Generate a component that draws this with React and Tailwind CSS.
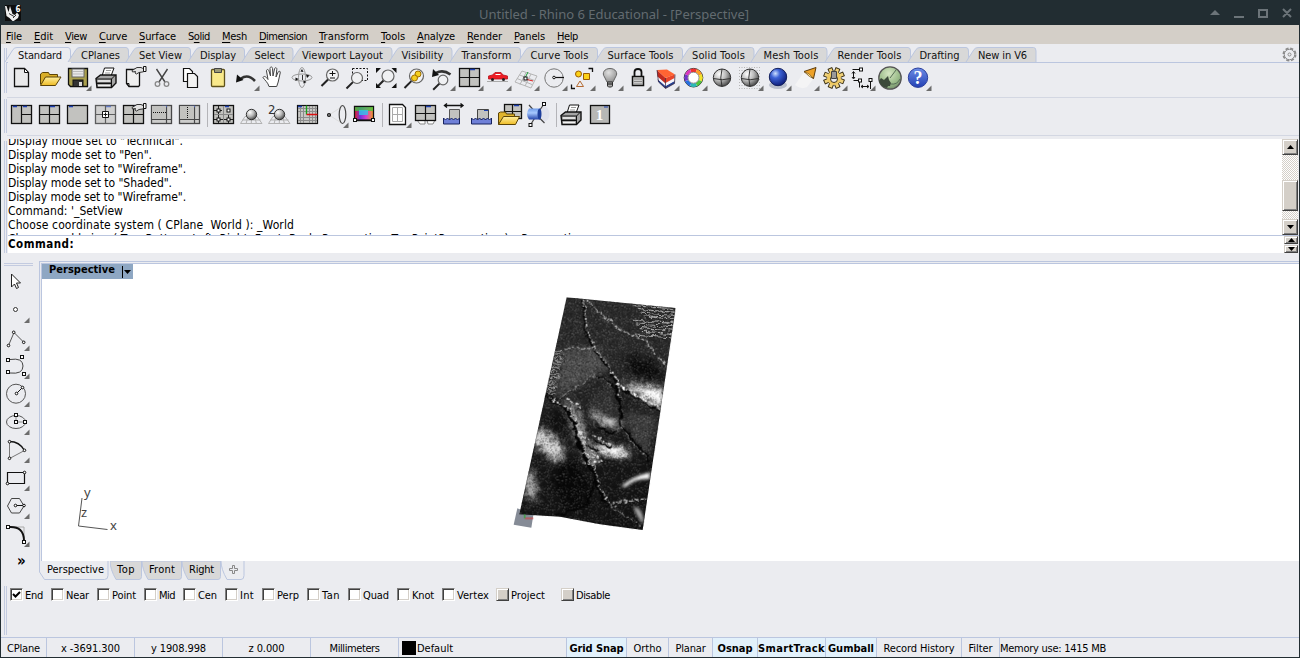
import React, { useLayoutEffect, useRef } from "react";

// Spreads a label's letters so that it fills the width given by its class.
function Fit({ className = "", children }) {
  const box = useRef(null);
  const inner = useRef(null);
  useLayoutEffect(() => {
    const n = inner.current.textContent.length;
    inner.current.style.letterSpacing = "0px";
    const natural = inner.current.getBoundingClientRect().width;
    inner.current.style.letterSpacing = (box.current.getBoundingClientRect().width - natural) / n + "px";
  }, []);
  return (
    <span ref={box} className={"inline-block shrink-0 whitespace-pre text-left " + className}>
      <span ref={inner} className="inline-block">{children}</span>
    </span>
  );
}

const menus = [
  ["", "F", "ile", "w-[16px]"], ["", "E", "dit", "w-[19px]"], ["", "V", "iew", "w-[22px]"], ["", "C", "urve", "w-[28px]"],
  ["", "S", "urface", "w-[37px]"], ["S", "o", "lid", "w-[22px]"], ["", "M", "esh", "w-[25px]"], ["", "D", "imension", "w-[48px]"],
  ["", "T", "ransform", "w-[50px]"], ["", "T", "ools", "w-[24px]"], ["", "A", "nalyze", "w-[38px]"], ["", "R", "ender", "w-[35px]"],
  ["", "P", "anels", "w-[31px]"], ["", "H", "elp", "w-[21px]"],
];

const tabs = [
  ["Standard", "w-[44px]", 63], ["CPlanes", "w-[39px]", 58], ["Set View", "w-[43px]", 62], ["Display", "w-[36px]", 54],
  ["Select", "w-[30px]", 48.5], ["Viewport Layout", "w-[81px]", 98.5], ["Visibility", "w-[42px]", 60.5], ["Transform", "w-[50px]", 68],
  ["Curve Tools", "w-[58px]", 77], ["Surface Tools", "w-[66px]", 85], ["Solid Tools", "w-[53px]", 71.5], ["Mesh Tools", "w-[55px]", 73.5],
  ["Render Tools", "w-[64px]", 83], ["Drafting", "w-[40px]", 58], ["New in V6", "w-[49px]", 67.5],
];

function TopTab({ label, fit, w, active }) {
  return (
    <div className="relative flex h-[15px] items-center justify-end pr-[9px]" style={{ width: w }}>
      <svg className="absolute left-0 top-0 overflow-visible" width={w} height="15">
        <path d={`M-3 15 L5 2.5 Q6.500 .5 9 .5 H${w - 3} Q${w - 0.5} .5 ${w - 0.5} 4 V15`} fill={active ? "#ebecf0" : "#d8d8d8"} stroke="#bbc6df" />
      </svg>
      <Fit className={"relative top-px text-[11px] leading-[14px] text-[#111] " + fit}>{label}</Fit>
    </div>
  );
}

const Corner = () => <path d="M27.500 21.500V27h-5.500z" fill="#6c6c6c" stroke="none" />;

function Icon({ children, c }) {
  return (
    <svg className="size-7 shrink-0" viewBox="0 0 28 28" fill="none" stroke="#111" strokeWidth="1">
      {children}
      {c && <Corner />}
    </svg>
  );
}

const Lens = ({ x = 16.500, y = 11.500, r = 6 }) => (
  <g>
    <path d={`M${x - r * 0.7} ${y + r * 0.7}L${x - r - 5} ${y + r + 5}`} stroke="#222" strokeWidth="2" />
    <circle cx={x} cy={y} r={r} fill="#f0f1f3" stroke="#666" strokeWidth="1.200" />
  </g>
);
const Panes = ({ x = 3.5, y = 4.5, w = 20, h = 18, sx = 10, sy = 9, tx = 14 }) => (
  <g>
    <rect x={x} y={y} width={w} height={h} fill="#c2c2bf" stroke="#111" strokeWidth="1.300" />
    <path d={`M${x + sx} ${y}v${h}M${x} ${y + sy}h${w}`} strokeWidth="1.200" />
    <path d={`M${tx} ${y + 1}h5`} stroke="#1d3fae" strokeWidth="1.500" />
  </g>
);
const Pointer = () => (
  <g>
    <path d="M12 6.500l5-3h4l1.500.8h1v3.500l-4.500.7-2.500 1.500-1.500-1 .5-1.500-3 .5z" fill="#e2e2e2" stroke="#222" strokeWidth=".9" />
    <path d="M23.500 2.500h2.500v5h-2.500z" fill="#fff" stroke="#111" />
  </g>
);
const Printer = () => (
  <g>
    <path d="M10 12l2.500-8h9.500l-3 8" fill="#fff" /><path d="M14 6.500h5M13 9h5" stroke="#999" />
    <path d="M4 14.500l4.500-3.500H24v8l-4.500 4.500H5z" fill="#a5a5a5" stroke="#111" strokeWidth="1.400" />
    <path d="M4 15h15.500l4-4M19.500 15v8" /><path d="M6 17h12M6 21.500h12" stroke="#f2f2f2" strokeWidth="1.300" /><path d="M5 19.300h14" strokeWidth="1.500" />
  </g>
);
const Ball = () => (
  <g><circle cx="14" cy="13.700" r="8.700" fill="url(#grey)" stroke="#333" /><path d="M5.300 14.500q9 2.500 17.400 0M14 5q-2.500 9 0 17.500" stroke="#2a2a2a" strokeWidth=".9" /></g>
);
const Dot = ({ x, y }) => <rect x={x - 1.5} y={y - 1.5} width="3" height="3" fill="#fff" stroke="#111" />;
const Pt = ({ x, y }) => <circle cx={x} cy={y} r="1.300" fill="#fff" stroke="#111" />;
const Wave = ({ x, y, w }) => (
  <path d={`M${x} ${y}l2 2 2-2 2 2 2-2 2 2 2-2 2 2 2-2${w > 16 ? "l2 2 2-2" : ""}v6h-${w}z`} fill="#6f80d8" stroke="#17235f" />
);
const BallGrid = () => (
  <g>
    <path d="M8 15.500h12l5 7H3.500zM5.500 19h18M11 15l-2 8M17.500 15l2 8M14.300 15v8" stroke="#b2b2b2" fill="none" />
    <circle cx="14.500" cy="13.500" r="5.200" fill="url(#grey)" stroke="#333" />
  </g>
);

function StandardBar() {
  return (
    <>
      <Icon><path d="M6.500 4.500h10l4 4v14h-14z" fill="#e9e9ea" strokeWidth="1.300" /><path d="M16.500 4.500v4h4z" fill="#fff" /></Icon>
      <Icon><path d="M4.500 20.500V10l2-1.500h6l1 2h8v3" fill="#d9ae28" stroke="#5c4407" /><path d="M4.500 21.500l5-8.500H25l-5.500 8.500z" fill="url(#gold)" stroke="#5c4407" /></Icon>
      <Icon c><path d="M4.500 4.500h19v18h-17l-2-2z" fill="#aaa04e" stroke="#111" strokeWidth="1.300" /><rect x="8" y="5" width="12" height="8" fill="#e8e8e8" stroke="#666" /><path d="M9 7.500h10M9 10h10" stroke="#bbb" /><rect x="9" y="16" width="10" height="6.500" fill="#333" /><path d="M15 18h3v4h-3z" fill="#ddd" stroke="none" /></Icon>
      <Icon><Printer /></Icon>
      <Icon><path d="M6.500 5.500h13v16l-1 1H9l-2.500-3z" fill="#efefef" strokeWidth="1.300" /><path d="M6.500 19.500H9v3" /><Pointer /></Icon>
      <Icon><path d="M8.500 5l8.500 13M19.500 5L11 18" stroke="#444" strokeWidth="1.400" /><circle cx="9.500" cy="20" r="2.300" stroke="#888" strokeWidth="1.300" /><circle cx="18.500" cy="20" r="2.300" stroke="#888" strokeWidth="1.300" /></Icon>
      <Icon><path d="M7.500 4.500h6l3 3v10h-9z" fill="#fff" strokeWidth="1.200" /><path d="M11.500 9.500h7l3 3v11h-10z" fill="#f2f2f2" strokeWidth="1.200" /></Icon>
      <Icon><rect x="7.500" y="5.500" width="13" height="17" rx="1" fill="#f9e98b" stroke="#5f521a" strokeWidth="1.300" /><path d="M10.500 4.500h7v4h-7z" fill="#9a9877" stroke="#444" /></Icon>
      <Icon c><path d="M9 14.500q7-5 14 2.500" stroke="#333" strokeWidth="2.600" /><path d="M4 18.500l1-8 6.500 5.500z" fill="#111" stroke="none" /></Icon>
      <Icon><path d="M9 22.500c-1-4-4-6-6-9 1-2 3-1 5 2L6.500 7c0-2 2-2 2.500 0l1.500 5-.5-7.500c0-2 2.500-2 2.500 0L13 12l1.500-7c.5-2 2.500-1.500 2.300.3L16 13l2.200-5c.8-1.500 2.500-.8 2 1l-2 9-1.500 4.500z" fill="#fff" stroke="#444" /></Icon>
      <Icon><ellipse cx="14" cy="13.500" rx="10" ry="3.500" stroke="#999" /><ellipse cx="14" cy="13.500" rx="3.500" ry="10" stroke="#999" /><path d="M10.500 15l-3 2v-3.500zM18 10.500l3.500 1-2.500 2.500zM12.500 7.500l1.500-2.500 1.500 3zM15.500 19.500l3-1.500-3-1.500z" fill="#111" stroke="none" /><path d="M14.500 11v5" stroke="#333" /></Icon>
      <Icon><Lens x={16.5} y={11} /><path d="M13.500 9.500h6M16.500 7v5M14 14h5" /></Icon>
      <Icon><path d="M8.500 4.500h15v12h-15z" strokeDasharray="2 1.500" /><Lens x={13} y={14} r={5.5} /></Icon>
      <Icon><Lens x={16} y={12} /><path d="M4 4h5l-5 5zM24.500 4h-5l5 5zM4 24v-5l5 5zM24.500 24v-5l-5 5z" fill="#111" stroke="none" /></Icon>
      <Icon><Lens x={16.5} y={12} r={7} /><circle cx="18" cy="10" r="3" fill="#f5cf20" stroke="#a07000" /><circle cx="14.500" cy="14" r="3" fill="#f5cf20" stroke="#a07000" /></Icon>
      <Icon c><path d="M8 9q7-4 14.500 1.500" stroke="#333" strokeWidth="2.600" /><path d="M4 13l1-8 6 6z" fill="#111" stroke="none" /><Lens x={15} y={16} r={4.8} /></Icon>
      <Icon c><Panes /></Icon>
      <Icon c><path d="M3 17.500h21" stroke="#aaa" /><path d="M4.500 15v-3l4-1 2.500-2.500h6l2 2.500 4.500 1v3z" fill="#ed1c24" stroke="#b5121a" strokeWidth=".8" /><path d="M11.500 10.500h5" stroke="#fff" /><circle cx="8.500" cy="15.500" r="1.500" fill="#222" stroke="none" /><circle cx="19.500" cy="15.500" r="1.500" fill="#222" stroke="none" /></Icon>
      <Icon c><path d="M10 7l15 5-6 12L3 18zM7.500 11l15 5.500M5 14.500l15 6M14 8.500l-6 12M19 10l-6 12" stroke="#b5b5b5" /><path d="M13 14l3-6" stroke="#159b32" /><path d="M13 15l8 2" stroke="#d22" /><Dot x={13.5} y={14.5} /></Icon>
      <Icon c><circle cx="14" cy="14" r="9.200" stroke="#777" /><path d="M14 13.500h10" strokeWidth="1.200" /><Pt x={14} y={13.5} /></Icon>
      <Icon c><circle cx="10.500" cy="10" r="3" fill="#fcd116" stroke="#9b5c00" /><path d="M15.500 9.500h6v6h-6z" fill="#fcd116" stroke="#9b5c00" /><path d="M12 17l3.500 5.500h-7z" stroke="#b46a32" /><path d="M20.500 4.500h4V8M3.500 20.500v4H7" strokeWidth="1.300" /></Icon>
      <Icon c><path d="M11 18l-2.500-5c-3-4 0-8.500 5.500-8.500s8.500 4.500 5.500 8.500L17 18z" fill="url(#bulb)" stroke="#666" /><path d="M11.500 18h5v4l-1 1h-3l-1-1z" fill="#aaa" stroke="#333" /><path d="M11.500 20h5" /></Icon>
      <Icon c><path d="M10.500 13V8q0-3 3.500-3t3.500 3v5" strokeWidth="1.800" /><path d="M8.500 12.500h11v9h-11z" fill="#ccc" strokeWidth="1.500" /><path d="M10 15h8M10 17.500h8M10 20h8" stroke="#888" /></Icon>
      <Icon c>
        <path d="M5.500 15l8 7v2.500L6.500 18zM13.500 22l9-5v2.500l-9 5z" fill="#27408f" stroke="none" />
        <path d="M5.500 12l8 7.500v2.500l-8-7zM13.500 19l9-5v3l-9 5z" fill="#f4f4fa" stroke="none" />
        <path d="M5 6l8.500 8v5.500L5.500 12.500z" fill="#c22a1e" stroke="none" />
        <path d="M13.500 14l9-3.500V14l-9 5z" fill="#e8452b" stroke="none" />
        <path d="M5 6l10-.5 8 5-9.500 3.500z" fill="#ff6433" stroke="none" />
        <path d="M5 6l1.500 12 7 6.500 9-5 .5-9M13.500 14v10" stroke="#30203a" strokeWidth=".7" />
      </Icon>
      <Icon c>
        <circle cx="13.500" cy="13.700" r="9.300" stroke="#333" />
        {["#ef3030", "#ff9c20", "#f2e428", "#51c63b", "#29b9b4", "#276fe0", "#7135cd", "#d936bd"].map((col, i) => (
          <path key={col} d="M10.700 6.800A7.400 7.400 0 0 1 16.300 6.800" stroke={col} strokeWidth="3.400" transform={`rotate(${i * 45} 13.500 13.700)`} />
        ))}
        <circle cx="13.500" cy="13.700" r="5.500" fill="#fff" stroke="#666" strokeWidth=".7" />
      </Icon>
      <Icon><Ball /></Icon>
      <Icon c><path d="M3 3.500h22M3 6.500h22M3 9.500h22M3 12.500h22M3 15.500h22M3 18.500h22M3 21.500h22M3 24.500h22" stroke="#b5b5b5" strokeDasharray="1 1.500" /><Ball /></Icon>
      <Icon c><ellipse cx="14" cy="21" rx="9" ry="4" fill="#b9bfcc" stroke="none" /><circle cx="14" cy="13" r="8.700" fill="url(#blue)" stroke="#14205c" /></Icon>
      <Icon c><path d="M12 8L3 21q6 5 12 2l7-9z" fill="#f4f4f5" stroke="none" /><path d="M12 7.500l12-4-2.500 11z" fill="#eda128" stroke="#5d3b0a" /><path d="M12 7.500q5 1 9.500 7l-4-2z" fill="#ffe08d" stroke="#5d3b0a" strokeWidth=".6" /></Icon>
      <Icon c>
        <g stroke="#33290f" strokeWidth="5">{[0, 45, 90, 135].map((a) => <path key={a} d="M14 3.200v21.600" transform={`rotate(${a + 22} 14 14)`} />)}</g>
        <g stroke="#f0d27c" strokeWidth="3.200">{[0, 45, 90, 135].map((a) => <path key={a} d="M14 4.100v19.800" transform={`rotate(${a + 22} 14 14)`} />)}</g>
        <circle cx="14" cy="14" r="7" fill="#eec963" stroke="none" /><circle cx="14" cy="15" r="3.500" fill="#ebecf0" stroke="#3e3418" /><path d="M11.500 7.500h5v7h-5z" fill="#9a9a9a" stroke="#444" />
      </Icon>
      <Icon c><path d="M4.500 5.500h9M5.500 8v6M5.500 16.500h6v7M22.500 16v9M13.500 22.500h7M4 9.500l1.500-2 1.500 2M4 13l1.500 2 1.500-2M15 21l-2 1.500 2 1.500M19 21l2 1.500-2 1.500" /><Dot x={13} y={5.5} /><Dot x={12} y={16.5} /><Dot x={22.5} y={16} /></Icon>
      <Icon><circle cx="14" cy="14" r="11.200" fill="url(#green)" stroke="#555" strokeWidth="1.300" /><path d="M5 14l3 2 4-4 1 4 2 3-1 3h-2l-1 2q-6-1-8-7z" fill="#3b493a" stroke="none" /><path d="M14 14L20 6M15 20q6 1 9-5" stroke="#587057" /></Icon>
      <Icon c><circle cx="14" cy="13.700" r="9.700" fill="url(#help)" stroke="#2b3f9c" /><text x="14" y="20" textAnchor="middle" fontSize="18" fontWeight="bold" fill="#fff" stroke="none" fontFamily="Liberation Serif, serif">?</text></Icon>
    </>
  );
}

const Sep = ({ className }) => (
  <div className={"flex h-7 items-center " + className}><div className="h-6 w-px bg-[#b4b4b8]" /></div>
);

function ViewBar() {
  return (
    <>
      <Icon><rect x="3.500" y="4.500" width="20" height="18" fill="#c2c2bf" strokeWidth="1.300" /><path d="M13.500 4.500v18M13.500 13.500h10" strokeWidth="1.200" /><path d="M5 5.500h4M15 5.500h4" stroke="#1d3fae" strokeWidth="1.500" /></Icon>
      <Icon><Panes /></Icon>
      <Icon><rect x="3.500" y="4.500" width="20" height="18" fill="#c2c2bf" strokeWidth="1.300" /><path d="M5 5.500h4" stroke="#1d3fae" strokeWidth="1.500" /></Icon>
      <Icon><g opacity=".65"><Panes /></g><path d="M10.500 10.500h6v6h-6z" fill="#fff" /><path d="M11.500 13.500h4M13.500 11.500v4" /></Icon>
      <Icon><Panes /><Pointer /></Icon>
      <Icon><g opacity=".75"><Panes sx={15} sy={14} /></g><path d="M4 5h14v13H4z" fill="#c2c2bf" stroke="none" /><path d="M5 11.500h13" strokeDasharray="1 1" /></Icon>
      <Icon><g opacity=".75"><Panes sx={15} sy={14} /></g><path d="M4 5h14v13H4z" fill="#c2c2bf" stroke="none" /><path d="M11.500 6v12" strokeDasharray="1 1" /></Icon>
      <Sep className="w-[5px] pl-[3px]" />
      <Icon><rect x="4.500" y="4.500" width="20" height="18" fill="#c2c2bf" strokeWidth="1.300" /><path d="M9.500 5v17M5 9.500h8M19.500 13v9M5 18.500h19" strokeWidth=".9" /><path d="M14.500 5v17M5 13.500h19" stroke="#888" /><Dot x={9.5} y={9.5} /><Dot x={19.5} y={9.5} /><Dot x={9.5} y={18.5} /><Dot x={19.5} y={18.5} /><path d="M16 5.500h4" stroke="#1d3fae" strokeWidth="1.500" /></Icon>
      <Icon><BallGrid /></Icon>
      <Icon><BallGrid /><text x="3" y="13" fontSize="13" fill="#333" stroke="none">2</text></Icon>
      <Icon><rect x="4.500" y="4.500" width="20" height="18" fill="#c8c8c5" strokeWidth="1.200" /><path d="M7.500 5v17M10.500 5v17M16.500 5v17M19.500 5v17M22.500 5v17M5 7.500h19M5 10.500h19M5 16.500h19M5 19.500h19" stroke="#8c8c8c" /><path d="M13.500 4.500v9" stroke="#19a319" strokeWidth="1.300" /><path d="M13.500 13.500h11" stroke="#d11" strokeWidth="1.500" /><path d="M5 5.500h4" stroke="#1d3fae" strokeWidth="1.500" /></Icon>
      <Icon c><path d="M8 14L22 5M8 14l14 9" stroke="#ddd" /><circle cx="8" cy="14" r="1.400" strokeWidth="1.300" /><ellipse cx="21.500" cy="13.500" rx="3.300" ry="9" stroke="#444" strokeWidth="1.200" /></Icon>
      <Icon>
        <path d="M5.500 5.500h19v14h-19z" fill="url(#rainbow)" strokeWidth="1.300" />
        <path d="M6 6h18v4H6z" fill="#35d33c" opacity=".7" stroke="none" /><path d="M10 9h9v5h-9z" fill="#30c8e8" opacity=".8" stroke="none" />
        <path d="M6 19h18" /><Dot x={6} y={19} /><Dot x={24} y={19} />
      </Icon>
      <Sep className="w-[7px] pl-[5px]" />
      <Icon c><path d="M5.500 3.500h13l3 3v17h-16z" fill="#fff" strokeWidth="1.300" /><path d="M8.500 6.500h10v14h-10zM13.500 6.500v14M8.500 13.500h10" stroke="#aaa" /></Icon>
      <Icon><path d="M5 19h8v4H8zM15 19h8l-2 4h-5z" fill="#fff" stroke="#888" /><Panes x={3.5} y={4.5} w={20} h={15} sy={8} /></Icon>
      <Icon><path d="M5 4.500h17M7 2.500L4.500 4.500 7 6.500M20.500 2.500l2.500 2-2.500 2" strokeWidth="1.400" /><path d="M9.500 8.500h10v13h-10z" fill="#c2c2bf" stroke="#555" /><Wave x={3.5} y={17} w={16} /></Icon>
      <Icon><path d="M9.500 8.500h11v10h-11z" fill="#c2c2bf" stroke="#444" /><path d="M16 9.500h4" stroke="#1d3fae" /><Wave x={3.5} y={17} w={20} /></Icon>
      <Icon><Panes x={8.5} y={3.5} w={17} h={14} sx={8} sy={7} tx={18} /><path d="M2.500 23.500V12l2-1h5l1 2h8v3" fill="#e0b42c" stroke="#5c4407" /><path d="M2.500 23.500l5-8h16l-4 8z" fill="url(#gold)" stroke="#5c4407" /></Icon>
      <Icon><ellipse cx="20" cy="13" rx="5.500" ry="7.500" fill="#e0e2ec" stroke="none" /><path d="M5 4l8 9 7-10M6.500 24l6-10 8 8" stroke="#444" strokeWidth="1.200" /><path d="M5 7.500h11v11H5q-4-5.500 0-11z" fill="url(#tube)" stroke="none" /><ellipse cx="15.500" cy="13" rx="2" ry="5.500" fill="#1e3f9d" stroke="none" /><Dot x={20} y={3} /><Dot x={6.5} y={24} /></Icon>
      <Sep className="w-[5px] pl-[4px]" />
      <Icon><Printer /></Icon>
      <Icon><rect x="5.500" y="4.500" width="19" height="18" fill="#b7b7b5" strokeWidth="1.300" /><path d="M19 6h4" stroke="#1d3fae" /><text x="14.500" y="19" fontSize="15" fontWeight="bold" textAnchor="middle" fill="#fff" stroke="none" fontFamily="Liberation Serif, serif">1</text></Icon>
    </>
  );
}

function SideBar() {
  return (
    <>
      <Icon><path d="M9.500 6v13l3-3 2 4.500 2-1-2-4.500h4z" fill="#fff" stroke="#222" /></Icon>
      <Icon c><circle cx="13.500" cy="13.500" r="2" fill="#fff" stroke="#333" /></Icon>
      <Icon c><path d="M6.500 21.500l5.500-13 10 10" stroke="#555" /><Pt x={6.5} y={21.5} /><Pt x={11.7} y={8.3} /><Pt x={21.7} y={18.3} /></Icon>
      <Icon c><path d="M8 7.500q13-2 13 6.500t-13 7" stroke="#444" /><Dot x={6} y={8} /><Dot x={20} y={5} /><Dot x={6} y={20} /><Dot x={22} y={22} /></Icon>
      <Icon c><circle cx="14" cy="13.700" r="9.500" stroke="#555" /><path d="M14.500 13.500l6-6" /><Pt x={14.5} y={13.5} /><Pt x={20.5} y={7.5} /></Icon>
      <Icon c><ellipse cx="14" cy="14" rx="9.500" ry="6.500" stroke="#555" /><path d="M14 7v7h9" stroke="#888" /><Dot x={14} y={14} /><Dot x={14} y={7} /><Dot x={23} y={14} /></Icon>
      <Icon c><path d="M7.500 5.500v17l15-8" stroke="#777" /><path d="M7.500 5.500q10 0 15 9" strokeWidth="1.300" /><Pt x={7.5} y={5.7} /><Pt x={7.5} y={22.3} /><Pt x={22.5} y={14.3} /></Icon>
      <Icon c><path d="M5.500 8.500h17v11h-17z" strokeWidth="1.200" /><Pt x={22.5} y={8.5} /><Pt x={5.5} y={19.5} /></Icon>
      <Icon c><path d="M5.500 14l4-7.500h8l4.500 7.500-4.500 7h-8z" stroke="#444" /><path d="M14 13.500h8" /><Pt x={13.5} y={13.5} /><Pt x={22} y={13.5} /></Icon>
      <Icon c><path d="M7 7h15v15" stroke="#aaa" /><path d="M7 7q15-1 15 14" strokeWidth="2" /><Dot x={6} y={7} /><Dot x={22} y={22} /></Icon>
    </>
  );
}

function Terrain() {
  return (
    <svg className="absolute left-[458px] top-[21px]" width="200" height="255" viewBox="0 0 600 765">
      <defs>
        <clipPath id="sheet"><path d="M200 37L527 69L428 735L300 718L180 695L58 688Z" /></clipPath>
        <filter id="speck" x="0" y="0" width="100%" height="100%" colorInterpolationFilters="sRGB">
          <feTurbulence type="fractalNoise" baseFrequency="0.31" numOctaves="2" seed="8" />
          <feColorMatrix values="0 0 0 0 1  0 0 0 0 1  0 0 0 0 1  7 0 0 0 -4" />
        </filter>
        <filter id="dark" x="0" y="0" width="100%" height="100%" colorInterpolationFilters="sRGB">
          <feTurbulence type="fractalNoise" baseFrequency="0.27" numOctaves="2" seed="21" />
          <feColorMatrix values="0 0 0 0 0.050  0 0 0 0 0.050  0 0 0 0 0.050  7 0 0 0 -3.700" />
        </filter>
        <filter id="rough" filterUnits="userSpaceOnUse" x="0" y="0" width="600" height="765" colorInterpolationFilters="sRGB">
          <feTurbulence type="fractalNoise" baseFrequency="0.050" numOctaves="3" seed="3" />
          <feDisplacementMap in="SourceGraphic" scale="22" xChannelSelector="R" yChannelSelector="G" />
        </filter>
        <filter id="soft" filterUnits="userSpaceOnUse" x="0" y="0" width="600" height="765" colorInterpolationFilters="sRGB">
          <feGaussianBlur stdDeviation="11" result="b" />
          <feTurbulence type="fractalNoise" baseFrequency="0.050" numOctaves="3" seed="5" result="n" />
          <feDisplacementMap in="b" in2="n" scale="34" xChannelSelector="R" yChannelSelector="G" />
        </filter>
        <filter id="soft2" x="-50%" y="-50%" width="200%" height="200%"><feGaussianBlur stdDeviation="4" /></filter>
        <linearGradient id="ground" x1="0" y1="0" x2="0.150" y2="1"><stop stopColor="#2c2c2c" /><stop offset=".42" stopColor="#2a2a2a" /><stop offset=".6" stopColor="#191919" /><stop offset="1" stopColor="#121212" /></linearGradient>
      </defs>
      <path d="M52 670L100 690L94 728L41 719Z" fill="#858b96" />
      <g clipPath="url(#sheet)">
        <rect width="600" height="765" fill="url(#ground)" />
        <g filter="url(#soft)">
          <path d="M190 190L300 190L325 250L220 310L165 325Z" fill="#505050" />
          <path d="M365 293L500 310L486 372L430 345Z" fill="#efefef" />
          <path d="M410 300L495 318L486 360Z" fill="#fff" />
          <ellipse cx="318" cy="402" rx="50" ry="22" fill="#c4c4c4" transform="rotate(24 318 402)" />
          <ellipse cx="335" cy="497" rx="54" ry="18" fill="#fff" transform="rotate(12 335 497)" />
          <ellipse cx="145" cy="480" rx="28" ry="60" fill="#dcdcdc" transform="rotate(-45 145 480)" />
          <ellipse cx="90" cy="600" rx="17" ry="52" fill="#bdbdbd" transform="rotate(-12 90 600)" />
          <path d="M195 340L235 365L262 470L290 510L285 545L235 490Z" fill="#969696" />
          <path d="M255 340L330 305L360 370L350 420L290 380Z" fill="#343434" />
          <path d="M380 375L475 390L445 520L380 440Z" fill="#404040" />
          <ellipse cx="430" cy="250" rx="60" ry="28" fill="#0a0a0a" transform="rotate(24 430 250)" />
          <ellipse cx="215" cy="600" rx="50" ry="80" fill="#080808" transform="rotate(-20 215 600)" />
          <ellipse cx="175" cy="405" rx="38" ry="25" fill="#101010" />
        </g>
        <g stroke="#c5c5c5" strokeWidth="3.500" fill="none" filter="url(#rough)">
          {[0, 1, 2, 3, 4, 5, 6, 7, 8].map((i) => <path key={i} d={`M${402 + (i % 4) * 9} ${62 + i * 11}l120 9`} opacity=".85" />)}
          {[0, 1, 2, 3, 4, 5, 6, 7, 8, 9, 10, 11, 12, 13].map((i) => <path key={i} d={`M${130} ${190 + i * 10}l${54 + (i % 3) * 5 - i * 2} 9`} opacity=".9" />)}
        </g>
        <rect width="600" height="765" filter="url(#dark)" opacity=".55" />
        <rect width="600" height="765" filter="url(#speck)" opacity=".24" />
        <g filter="url(#soft2)">
          <path d="M362 606Q395 575 450 562L448 582Q405 580 380 604Z" fill="#fff" />
          <path d="M400 665Q432 668 430 718Q410 695 400 665Z" fill="#aaa" />
          <path d="M305 490L355 492L350 508Z" fill="#fff" />
          <path d="M425 308L482 326L478 350Z" fill="#fff" opacity=".8" />
          <path d="M308 400L345 404L335 425Z" fill="#ddd" opacity=".8" />
        </g>
        <g filter="url(#rough)" fill="none">
          <path d="M246 45L258 140L281 190L321 240L346 285L362 340L360 420L450 525" stroke="#060606" strokeWidth="7" />
          <path d="M140 330L196 370L226 420L236 480L286 570L296 620L330 660" stroke="#050505" strokeWidth="11" />
          <path d="M250 45L262 140L285 190L325 240L350 285L365 345" stroke="#eee" strokeWidth="4" strokeDasharray="6 4 3 5" />
          <path d="M258 45L310 95L370 140L440 170L500 250" stroke="#ccc" strokeWidth="4" strokeDasharray="9 4 3 3" />
          <path d="M350 295L430 340L485 370" stroke="#fff" strokeWidth="5" strokeDasharray="9 4 3 3" />
          <path d="M355 305L430 352L485 382" stroke="#050505" strokeWidth="5" />
          <path d="M145 335L205 370L235 425L250 490L285 550L300 610L330 658L380 650L440 640" stroke="#ddd" strokeWidth="4" strokeDasharray="8 4 3 3" />
          <path d="M180 340L285 268L340 310M360 425L405 480L440 520M330 660L425 725M185 190h100" stroke="#a5a5a5" strokeWidth="3" strokeDasharray="12 3" />
          <path d="M250 470l45 50m-50-15l60 20m-55 10l50-5M280 450l45 25M200 340l45 30M240 440l30 30" stroke="#eee" strokeWidth="4.500" strokeDasharray="9 6" />
          <path d="M255 480l40 20M280 465l50 22M300 435l50 10" stroke="#050505" strokeWidth="6" />
          <path d="M290 270L350 310L365 400" stroke="#060606" strokeWidth="5" />
          <path d="M285 580L260 660L170 690" stroke="#050505" strokeWidth="6" />
        </g>
      </g>
      <path d="M75 700h25" stroke="#d33" strokeWidth="3" /><path d="M74 700v-12" stroke="#2a2" strokeWidth="3" />
    </svg>
  );
}

const log = [
  ['Display mode set to "Technical".', "w-[175px]"], ['Display mode set to "Pen".', "w-[144px]"], ['Display mode set to "Wireframe".', "w-[178px]"],
  ['Display mode set to "Shaded".', "w-[164px]"], ['Display mode set to "Wireframe".', "w-[178px]"], ["Command: '_SetView", "w-[115px]"],
  ["Choose coordinate system ( CPlane  World ): _World", "w-[286px]"],
  ["Choose world view ( Top  Bottom  Left  Right  Front  Back  Perspective  TwoPointPerspective ): _Perspective", "w-[576px]"],
];

const snaps = [
  ["End", "w-[41px]", "w-[18px]"], ["Near", "w-[46px]", "w-[23px]"], ["Point", "w-[47px]", "w-[24px]"], ["Mid", "w-[39px]", "w-[16px]"],
  ["Cen", "w-[42px]", "w-[19px]"], ["Int", "w-[37px]", "w-[14px]"], ["Perp", "w-[45px]", "w-[22px]"], ["Tan", "w-[41px]", "w-[18px]"],
  ["Quad", "w-[49px]", "w-[26px]"], ["Knot", "w-[45px]", "w-[22px]"], ["Vertex", "w-[54px]", "w-[32px]"], ["Project", "w-[65px]", "w-[34px]"],
  ["Disable", "w-[60px]", "w-[34px]"],
];

const cells = [
  ["CPlane", "w-[46px]", "w-[33px]"], ["x -3691.300", "w-[88px]", "w-[59px]"], ["y 1908.998", "w-[88px]", "w-[55px]"],
  ["z 0.000", "w-[88px]", "w-[36px]"], ["Millimeters", "w-[88px]", "w-[50px]"], ["Default", "w-[168px]", "w-[36px]", "layer"],
  ["Grid Snap", "w-[60px]", "w-[54px]", "on"], ["Ortho", "w-[42px]", "w-[28px]"], ["Planar", "w-[44px]", "w-[30px]"],
  ["Osnap", "w-[45px]", "w-[35px]", "on"], ["SmartTrack", "w-[68px]", "w-[67px]", "on"], ["Gumball", "w-[51px]", "w-[46px]", "on"],
  ["Record History", "w-[85px]", "w-[71px]"], ["Filter", "w-[38px]", "w-[24px]"], ["Memory use: 1415 MB", "grow", "w-[106px]", "last"],
];

const Btn = ({ className, up, down }) => (
  <div className={"flex shrink-0 items-center justify-center border border-b-[#404040] border-l-[#d4cfc8] border-r-[#404040] border-t-[#d4cfc8] bg-[#d4cfc8] shadow-[inset_1px_1px_#fff,inset_-1px_-1px_#808080] " + className}>
    {(up || down) && <svg width="7" height="4" viewBox="0 0 7 4"><path d={up ? "M0 4L3.500 0L7 4z" : "M0 0h7L3.500 4z"} fill="#000" /></svg>}
  </div>
);

const GripV = ({ className }) => <div className={"w-[3px] shrink-0 border-x border-[#c3cbe0] " + className} />;

const viewTabs = [["Top", "w-[32px]", "w-[18px]", 32], ["Front", "w-[40px]", "w-[26px]", 40], ["Right", "w-[39px]", "w-[25px]", 39]];

export default function App() {
  return (
    <div className="flex h-[658px] w-[1300px] flex-col overflow-hidden bg-[#222d32] font-['DejaVu_Sans_Condensed','DejaVu_Sans',sans-serif] text-[11px] leading-[14px] text-black">
      <svg className="absolute size-0">
        <defs>
          <radialGradient id="grey" cx=".35" cy=".3" r=".75"><stop stopColor="#fff" /><stop offset=".5" stopColor="#b8b8b8" /><stop offset="1" stopColor="#444" /></radialGradient>
          <radialGradient id="bulb" cx=".4" cy=".3" r=".8"><stop stopColor="#e0e0e0" /><stop offset="1" stopColor="#888" /></radialGradient>
          <radialGradient id="blue" cx=".35" cy=".3" r=".75"><stop stopColor="#cde0ff" /><stop offset=".35" stopColor="#3c62d6" /><stop offset="1" stopColor="#0c1a75" /></radialGradient>
          <radialGradient id="green" cx=".45" cy=".3" r=".75"><stop stopColor="#d5e6c2" /><stop offset=".6" stopColor="#9cbd8b" /><stop offset="1" stopColor="#6d8965" /></radialGradient>
          <linearGradient id="help" x2="0" y2="1"><stop stopColor="#6d8de6" /><stop offset="1" stopColor="#2340b4" /></linearGradient>
          <linearGradient id="tube" x2="0" y2="1"><stop stopColor="#6f9be8" /><stop offset=".4" stopColor="#a6c8ff" /><stop offset="1" stopColor="#2343ab" /></linearGradient>
          <linearGradient id="gold" x2="0" y2="1"><stop stopColor="#fff0a0" /><stop offset="1" stopColor="#eebb24" /></linearGradient>
          <linearGradient id="rainbow"><stop stopColor="#e22" /><stop offset=".3" stopColor="#6b35dd" /><stop offset=".6" stopColor="#d33bd0" /><stop offset="1" stopColor="#f5a020" /></linearGradient>
        </defs>
      </svg>

      <header className="flex h-[25px] shrink-0 items-center pl-[5px] pr-[7px] text-[#626b70]">
        <svg width="16" height="16" viewBox="0 0 16 16"><rect width="16" height="16" fill="#0d0d0d" /><path d="M0 1l1.500 0 2 6 1.500-6 2.500 8 2.500 1 2-2.500 2 2.500-1 3-5 3.500-3.500-3.500-3-2z" fill="#eee" /><path d="M4 8.500l5 3M8 13l3-3" stroke="#333" /><text x="10.500" y="7" fontSize="8" fontWeight="bold" fill="#fff">6</text></svg>
        <Fit className="ml-[458px] mt-[3px] w-[270px] font-['Noto_Sans',sans-serif] text-[13px] leading-[18px]">Untitled - Rhino 6 Educational - [Perspective]</Fit>
        <svg className="ml-auto" width="84" height="14" viewBox="0 0 84 14" fill="none" stroke="#6c7479" strokeWidth="2"><path d="M1 9l5-5 5 5z" fill="#6c7479" stroke="none" /><path d="M25 11h10M50 4h8v7h-8zM74 3l8 8M82 3l-8 8" /></svg>
      </header>

      <div className="mx-px mb-px flex min-h-0 grow flex-col bg-[#ebecf0]">
        <nav className="flex h-[19px] shrink-0 items-center gap-3 bg-[#d4cfc8] pl-[5px] pt-[4px]">
          {menus.map(([a, b, c, w]) => <Fit key={a + b + c} className={w}>{a}<span className="underline underline-offset-2">{b}</span>{c}</Fit>)}
        </nav>

        <div className="flex h-[92px] shrink-0">
          <div className="flex w-[6px] flex-col gap-[6px] pl-[3px] pt-[4px]"><GripV className="h-[45px]" /><GripV className="h-[34px]" /></div>
          <div className="flex grow flex-col">
            <div className="flex h-[19px] items-end border-b border-[#bbc6df] pr-[2px]">
              <div className="flex h-[15px] pl-px">
                {tabs.map(([label, fit, w], i) => (
                  <div key={label} className={i === 0 ? "-mb-px h-4 bg-[#ebecf0]" : ""}><TopTab label={label} fit={fit} w={w} active={i === 0} /></div>
                ))}
              </div>
              <svg className="ml-auto" width="15" height="15" viewBox="0 0 15 15" fill="none" stroke="#8b8b8b"><circle cx="7.500" cy="7.500" r="6" strokeWidth="2" strokeDasharray="3 1.710" /><circle cx="7.500" cy="7.500" r="5.200" fill="#ebecf0" /><circle cx="7.500" cy="7.500" r="1.500" /></svg>
            </div>
            <div className="flex h-[35px] border-b border-[#d3d7e2] pl-px pt-px"><StandardBar /></div>
            <div className="flex h-[38px] border-b border-[#d3d7e2] pl-px pt-[3px]"><ViewBar /></div>
          </div>
        </div>

        <div className="mt-[3px] flex h-[114px] shrink-0 pl-[3px]">
          <GripV className="mt-[2px]" />
          <div className="ml-px flex min-w-0 grow flex-col bg-white text-[12px]">
            <div className="flex h-[97px] border-b border-[#bbc6df]">
              <div className="-mt-[5px] flex h-[101px] min-w-0 grow flex-col overflow-hidden [clip-path:inset(5px_0_0_0)]">
                {log.map(([t, w], i) => <Fit key={i} className={"h-[14px] " + w}>{t}</Fit>)}
              </div>
              <div className="flex w-4 flex-col bg-[repeating-conic-gradient(#d4cfc8_0_25%,#fff_0_50%)] bg-[length:2px_2px]">
                <Btn up className="h-4 w-4" /><div className="h-[25px]" /><Btn className="h-[31px] w-4" /><div className="grow" /><Btn down className="h-4 w-4" />
              </div>
              <div className="w-px bg-[#ebecf0]" />
            </div>
            <div className="flex h-[17px]">
              <Fit className="mt-px w-[66px] text-[11.5px] font-bold">Command:</Fit>
              <div className="ml-auto flex w-[15px] flex-col gap-px bg-[#ebecf0] pr-px"><Btn up className="h-2 w-[14px]" /><Btn down className="h-2 w-[14px]" /></div>
            </div>
          </div>
        </div>

        <div className="flex h-[327px] shrink-0">
          <aside className="flex w-[38px] shrink-0 flex-col pl-px pt-[10px]">
            <div className="ml-[2px] h-[3px] w-[29px] border-y border-[#c3cbe0]" />
            <div className="mt-[2px] flex flex-col"><SideBar /></div>
            <div className="ml-[15px] mt-[4px] text-[15px] font-bold leading-[18px]">»</div>
          </aside>
          <main className="flex min-w-0 grow flex-col pt-[8px]">
            <div className="h-[300px] border-l border-t border-[#bbc6df] pl-px pt-px">
              <div className="relative h-full border-l border-t border-[#bbc6df] bg-white">
                <div className="flex h-[15px] w-[91px] items-center bg-[#8ea7c3] pl-[7px]">
                  <Fit className="mb-[3px] w-[66px] font-bold">Perspective</Fit>
                  <span className="ml-[7px] h-3 w-px bg-black" />
                  <svg className="ml-px" width="7" height="4"><path d="M0 0h7L3.500 4z" /></svg>
                </div>
                <svg className="absolute left-[30px] top-[216px]" width="50" height="56" fill="none" stroke="#555"><path d="M6.500 46L10 18M6.500 46l29 3.500" /><g fill="#444" stroke="none" fontSize="13" fontFamily="Noto Sans, sans-serif"><text x="12" y="17">y</text><text x="9" y="37">z</text><text x="38" y="50">x</text></g></svg>
                <Terrain />
              </div>
            </div>
            <div className="flex h-[19px]">
              <div className="relative w-[71px] pl-[8px] pt-[2px]">
                <svg className="absolute left-0 top-0 overflow-visible" width="70" height="19" fill="none" stroke="#bbc6df"><path d="M.5 0v11l5 7.500h60q3.500 0 3.500-4V0" /></svg>
                <Fit className="w-[57px]">Perspective</Fit>
              </div>
              {viewTabs.map(([t, w, f, n]) => (
                <div key={t} className={"relative flex justify-center pt-[2px] " + w}>
                  <svg className="absolute left-0 top-0" width={n} height="19" stroke="#bbc6df" fill="#d8d8d8"><path d={`M0 0q0 8 6 18.500h${n - 9}q2.500 0 2.500-3V0z`} /></svg>
                  <Fit className={"relative " + f}>{t}</Fit>
                </div>
              ))}
              <svg width="26" height="19" fill="none" stroke="#bbc6df"><path d="M0 0q0 8 6 18.500h14q3 0 3-4V0" /><path d="M11.500 4.500h2v3h3v2h-3v3h-2v-3h-3v-2h3z" stroke="#888" /></svg>
            </div>
          </main>
        </div>

        <div className="flex grow pl-[3px] pt-[6px]">
          <GripV className="mb-[2px]" />
          <div className="ml-[3px] flex pt-[2px]">
            {snaps.map(([t, w, f], i) => (
              <div key={t} className={"flex h-[14px] items-center " + w}>
                {i < 11 ? (
                  <div className="mb-px flex size-[13px] shrink-0 items-center justify-center border border-b-white border-l-[#808080] border-r-white border-t-[#808080] bg-white shadow-[inset_1px_1px_#404040,inset_-1px_-1px_#d4cfc8]">
                    {i === 0 && <svg width="9" height="9" fill="none" stroke="#000" strokeWidth="2"><path d="M1 4l2.500 2.500L8 2" /></svg>}
                  </div>
                ) : <Btn className="mb-px size-[13px]" />}
                <Fit className={"mt-px ml-[2px] " + f}>{t}</Fit>
              </div>
            ))}
          </div>
        </div>

        <footer className="flex h-[20px] shrink-0 border-t border-[#bbc6df]">
          {cells.map(([t, w, f, kind]) => (
            <div key={t} className={"flex items-center pt-[3px] " + w + (kind === "last" ? "" : kind === "layer" ? " border-r border-[#bbc6df] pl-[3px]" : " justify-center border-r border-[#bbc6df]") + (kind === "on" ? " bg-[#e2f1fb] font-bold" : "")}>
              {kind === "layer" && <span className="mb-[3px] mr-px size-[14px] bg-black" />}
              <Fit className={f}>{t}</Fit>
            </div>
          ))}
        </footer>
      </div>
    </div>
  );
}
